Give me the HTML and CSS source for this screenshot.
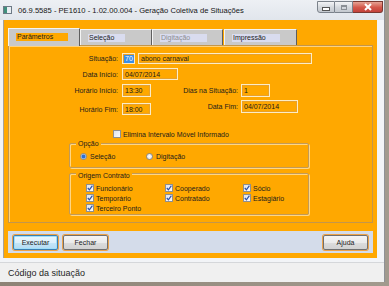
FILE: index.html
```html
<!DOCTYPE html>
<html lang="pt-BR">
<head>
    <meta charset="UTF-8">
    <title>Geração Coletiva de Situações</title>
    <link rel="stylesheet" href="styles.css">
</head>
<body>
    <div class="window">
        <div class="titlebar">
            <span class="app-icon"></span>
            <span class="title">06.9.5585 - PE1610 - 1.02.00.004 - Geração Coletiva de Situações</span>
            <div class="controls">
                <span class="ctl min"><i></i></span>
                <span class="ctl max"><i></i></span>
                <span class="ctl close">
                    <svg width="10" height="8" viewBox="0 0 10 8"><path d="M2 1 L8 7 M8 1 L2 7" stroke="#fff" stroke-width="2"/></svg>
                </span>
            </div>
        </div>

        <div class="frame">
            <div class="client">
                <div class="tabs">
                    <div class="tab active"><span class="tab-label w52">Parâmetros</span></div>
                    <div class="tab"><span class="tab-label w37">Seleção</span></div>
                    <div class="tab disabled"><span class="tab-label w47">Digitação</span></div>
                    <div class="tab"><span class="tab-label w48">Impressão</span></div>
                </div>

                <div class="panel">
                    <div class="row row-a">
                        <label class="lbl">Situação:</label>
                        <span class="field code"><span class="sel">70</span></span>
                        <span class="field name">abono carnaval</span>
                    </div>
                    <div class="row row-b">
                        <label class="lbl">Data Início:</label>
                        <span class="field date">04/07/2014</span>
                    </div>
                    <div class="row row-c">
                        <label class="lbl">Horário Início:</label>
                        <span class="field time">13:30</span>
                        <label class="lbl2">Dias na Situação:</label>
                        <span class="field days">1</span>
                    </div>
                    <div class="row row-d">
                        <div class="pair shifted">
                            <label class="lbl">Horário Fim:</label>
                            <span class="field time">18:00</span>
                        </div>
                        <label class="lbl2 tall">Data Fim:</label>
                        <span class="field date-end">04/07/2014</span>
                    </div>
                    <div class="row row-e">
                        <span class="check off"></span>
                        <span class="check-text">Elimina Intervalo Móvel Informado</span>
                    </div>

                    <div class="group opcao">
                        <span class="group-title">Opção</span>
                        <div class="radios">
                            <span class="radio-item"><span class="radio on"></span>Seleção</span>
                            <span class="radio-item"><span class="radio"></span>Digitação</span>
                        </div>
                    </div>

                    <div class="group origem">
                        <span class="group-title low">Origem Contrato</span>
                        <div class="checks">
                            <span class="check-item"><span class="check"><svg width="6" height="6" viewBox="0 0 6 6"><path d="M0.8 3 L2.4 4.8 L5.4 0.6" stroke="#2a4fa8" stroke-width="1.2" fill="none"/></svg></span>Funcionário</span>
                            <span class="check-item"><span class="check"><svg width="6" height="6" viewBox="0 0 6 6"><path d="M0.8 3 L2.4 4.8 L5.4 0.6" stroke="#2a4fa8" stroke-width="1.2" fill="none"/></svg></span>Cooperado</span>
                            <span class="check-item"><span class="check"><svg width="6" height="6" viewBox="0 0 6 6"><path d="M0.8 3 L2.4 4.8 L5.4 0.6" stroke="#2a4fa8" stroke-width="1.2" fill="none"/></svg></span>Sócio</span>
                            <span class="check-item"><span class="check"><svg width="6" height="6" viewBox="0 0 6 6"><path d="M0.8 3 L2.4 4.8 L5.4 0.6" stroke="#2a4fa8" stroke-width="1.2" fill="none"/></svg></span>Temporário</span>
                            <span class="check-item"><span class="check"><svg width="6" height="6" viewBox="0 0 6 6"><path d="M0.8 3 L2.4 4.8 L5.4 0.6" stroke="#2a4fa8" stroke-width="1.2" fill="none"/></svg></span>Contratado</span>
                            <span class="check-item"><span class="check"><svg width="6" height="6" viewBox="0 0 6 6"><path d="M0.8 3 L2.4 4.8 L5.4 0.6" stroke="#2a4fa8" stroke-width="1.2" fill="none"/></svg></span>Estagiário</span>
                            <span class="check-item"><span class="check"><svg width="6" height="6" viewBox="0 0 6 6"><path d="M0.8 3 L2.4 4.8 L5.4 0.6" stroke="#2a4fa8" stroke-width="1.2" fill="none"/></svg></span>Terceiro Ponto</span>
                        </div>
                    </div>
                </div>

                <div class="buttonbar">
                    <button class="btn default">Executar</button>
                    <button class="btn">Fechar</button>
                    <button class="btn push-right">Ajuda</button>
                </div>
            </div>
        </div>

        <div class="statusbar">Código da situação</div>
    </div>
</body>
</html>
```

FILE: styles.css
```css
* {
    box-sizing: border-box;
}
body {
    margin: 0;
    width: 389px;
    height: 286px;
    overflow: hidden;
    background: linear-gradient(90deg, #8d8275, #a29a8e);
    font-family: 'Liberation Sans', Arial, sans-serif;
    color: #1b1b1b;
}
.window {
    width: 385px;
    height: 282px;
    background: #f2f4f7;
    border-right: 1px solid #8e9196;
    display: flex;
    flex-direction: column;
}

/* title bar */
.titlebar {
    height: 20px;
    flex: none;
    display: flex;
    align-items: center;
    padding-left: 3px;
    background: linear-gradient(#edf0f4, #e1e6ec);
}
.app-icon {
    width: 9px;
    height: 8px;
    border: 1px solid #6d7a86;
    background: linear-gradient(90deg, #3f8f7d 0 3px, #e9eef2 3px);
}
.title {
    margin-left: 6px;
    font-size: 7.6px;
    color: #141414;
    white-space: nowrap;
}
.controls {
    margin-left: auto;
    margin-right: 1px;
    align-self: flex-start;
    margin-top: 1px;
    display: flex;
}
.ctl {
    height: 12px;
    display: flex;
    align-items: center;
    justify-content: center;
    border: 1px solid #7b828b;
    border-left: none;
    background: linear-gradient(#f3f4f6, #d3d7dc 55%, #c4c9cf);
}
.ctl.min {
    width: 18px;
    border-left: 1px solid #7b828b;
    border-radius: 0 0 0 3px;
}
.ctl.max {
    width: 18px;
}
.ctl.min i {
    width: 6px;
    height: 2px;
    margin-top: 4px;
    background: #fff;
    border: 1px solid #555;
    box-sizing: content-box;
}
.ctl.max i {
    width: 6px;
    height: 5px;
    border: 1px solid #8a8f95;
    box-shadow: inset 0 1px 0 #8a8f95;
}
.ctl.close {
    width: 30px;
    border-color: #7a3830;
    border-radius: 0 0 3px 0;
    background: linear-gradient(#e6a394, #d4574a 55%, #c3423a);
}

/* window body */
.frame {
    height: 238px;
    flex: none;
    display: flex;
    padding-left: 3px;
    padding-right: 6px;
}
.client {
    width: 374px;
    background: #ffa800;
    border-left: 1px solid #a7a29a;
    padding: 8px 4px 5px 4px;
    display: flex;
    flex-direction: column;
}

/* tabs */
.tabs {
    height: 17px;
    display: flex;
    align-items: flex-end;
    position: relative;
    z-index: 1;
}
.tab {
    height: 16px;
    display: flex;
    align-items: center;
    padding-left: 7px;
    background: #c9c9c9;
    border-top: 1px solid #f4f4f4;
    border-left: 1px solid #f4f4f4;
    border-right: 1px solid #5e5e5e;
    font-size: 7px;
}
.tab:nth-child(2) { width: 72px; }
.tab:nth-child(3) { width: 71px; }
.tab:nth-child(4) { width: 73px; margin-left: 1px; }
.tab.active {
    width: 72px;
    height: 18px;
    margin-bottom: -1px;
    padding-bottom: 1px;
    background: #c9c9c9;
    border-bottom: none;
}
.tab-label {
    height: 8px;
    line-height: 8px;
    padding-left: 1px;
    background: #d9dcef;
}
.tab.active .tab-label {
    background: #ffa800;
}
.tab.disabled .tab-label {
    color: #8d8d92;
}
.w52 { width: 52px; }
.w37 { width: 37px; }
.w47 { width: 47px; }
.w48 { width: 48px; }

/* tab page */
.panel {
    height: 178px;
    border: 1px solid #c3964a;
    box-shadow: inset 1px 1px 0 #ffd27c;
    font-size: 7px;
}
.row {
    display: flex;
    align-items: center;
}
.row-a { margin-top: 7px; height: 11px; }
.row-b { margin-top: 4px; height: 12px; }
.row-c { margin-top: 4px; height: 13px; }
.row-d { margin-top: 3px; height: 15px; align-items: flex-start; }
.row-e { margin-top: 15px; height: 8px; }
.pair {
    display: flex;
    align-items: center;
}
.pair.shifted {
    margin-top: 3px;
    height: 12px;
}
.lbl {
    width: 113px;
    padding-right: 4px;
    text-align: right;
    white-space: nowrap;
}
.lbl2 {
    width: 90px;
    padding-right: 3px;
    text-align: right;
    white-space: nowrap;
}
.row-c .lbl2 { width: 90px; }
.row-d .lbl2 { width: 90px; height: 13px; line-height: 13px; }
.field {
    display: flex;
    align-items: center;
    height: 100%;
    padding-left: 2px;
    border: 1px solid #fbecc8;
    box-shadow: inset 0 0 0 1px #e8a12a;
    white-space: nowrap;
}
.field.code { width: 13px; padding-left: 1px; }
.field.name { width: 174px; margin-left: 3px; }
.field.date { width: 56px; }
.field.time { width: 29px; }
.field.days { width: 29px; }
.field.date-end { width: 57px; height: 13px; }
.sel {
    background: #3a8ee6;
    color: #fff;
    padding: 0 1px;
    line-height: 8px;
}

/* checkboxes and radios */
.check {
    width: 8px;
    height: 8px;
    flex: none;
    display: flex;
    align-items: center;
    justify-content: center;
    border: 1px solid #8f8f8f;
    background: linear-gradient(135deg, #dfe3ea, #fbfbfc);
}
.row-e .check {
    margin-left: 104px;
}
.check-text {
    margin-left: 2px;
}
.group {
    margin-left: 60px;
    width: 240px;
    margin-top: 5px;
    border: 1px solid #c19a58;
    box-shadow: inset 1px 1px 0 #ffd684, 1px 1px 0 #ffd684;
    border-radius: 2px;
}
.group.opcao { height: 25px; }
.group.origem { height: 42px; }
.group-title {
    display: table;
    margin-top: -4px;
    margin-left: 6px;
    padding: 0 2px;
    height: 8px;
    line-height: 8px;
    background: #ffa800;
}
.group-title.low {
    margin-top: -2px;
}
.radios {
    display: flex;
    margin-top: 4px;
    padding-left: 10px;
    height: 8px;
}
.radio-item {
    display: flex;
    align-items: center;
    gap: 3px;
    width: 66px;
}
.radio {
    width: 7px;
    height: 7px;
    border-radius: 50%;
    border: 1px solid #8a8a8a;
    background: radial-gradient(#ffffff, #d7dbe2);
}
.radio.on {
    background: radial-gradient(#2d6fd0 0 1.6px, #9cc4ee 2.2px, #e8eef6 3px);
}
.checks {
    display: grid;
    grid-template-columns: 79px 78px auto;
    grid-auto-rows: 10px;
    margin-top: 3px;
    padding-left: 16px;
}
.check-item {
    display: flex;
    align-items: center;
    gap: 2px;
}

/* bottom buttons */
.buttonbar {
    margin-top: 8px;
    height: 22px;
    display: flex;
    align-items: center;
    gap: 5px;
    padding: 0 5px;
    background: #d4dcea;
}
.btn {
    width: 45px;
    height: 15px;
    padding: 0;
    font-family: 'Liberation Sans', Arial, sans-serif;
    font-size: 7px;
    color: #1b1b1b;
    border: 1px solid #707070;
    border-radius: 2px;
    background: linear-gradient(#f4f4f4, #ebebeb 50%, #dcdcdc 51%, #d2d2d2);
    box-shadow: 0 0 0 1px #eca24a;
}
.btn.default {
    border-color: #3c7fb1;
    box-shadow: inset 0 0 0 1px #9fe0fa, 0 0 0 1px #eca24a;
    background: linear-gradient(#ecf7fd, #dcf0fb 50%, #c4e6f8 51%, #b6dcf3);
}
.push-right {
    margin-left: auto;
}

/* status bar */
.statusbar {
    margin-top: 4px;
    height: 20px;
    flex: none;
    display: flex;
    align-items: center;
    padding-left: 8px;
    font-size: 9px;
    color: #1e1e1e;
    background: #f0f0f0;
    border-top: 1px solid #d5d7da;
}
```
